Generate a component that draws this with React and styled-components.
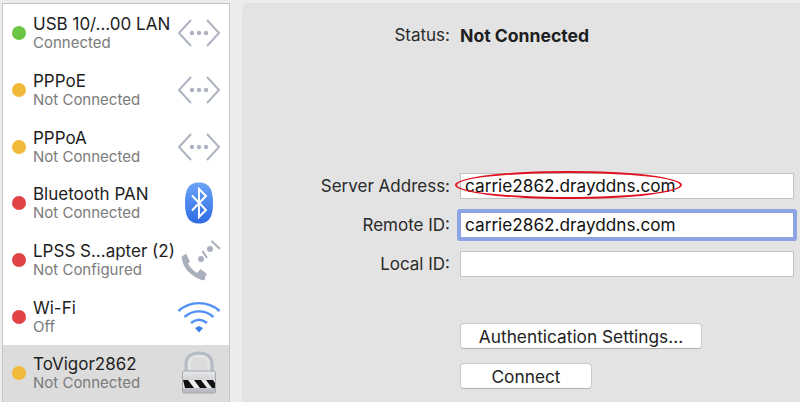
import React from 'react';
import styled, { createGlobalStyle } from 'styled-components';

const GlobalStyle = createGlobalStyle`
  html, body {
    margin: 0;
    padding: 0;
    background: #ececec;
  }
  * {
    box-sizing: border-box;
  }
`;

const Window = styled.div`
  width: 800px;
  height: 402px;
  overflow: hidden;
  display: flex;
  gap: 12px;
  padding: 3px 0 0 2px;
  background: #ececec;
  font-family: Inter, "Liberation Sans", Arial, sans-serif;
`;

const Sidebar = styled.ul`
  flex: 0 0 228px;
  margin: 0;
  padding: 1px 0 0;
  list-style: none;
  background: #fff;
  border: 1px solid #c6c6c6;
  border-bottom: none;
`;

const Row = styled.li`
  height: 56.7px;
  display: flex;
  align-items: center;
  padding: 0 8px 0 9px;
  background: ${(p) => (p.$selected ? '#dcdcdc' : 'transparent')};
`;

const Dot = styled.span`
  flex: 0 0 14px;
  height: 14px;
  border-radius: 50%;
  margin-right: 7px;
  background: ${(p) => p.$color};
`;

const RowText = styled.div`
  flex: 1;
  min-width: 0;
  padding-top: 1px;
  white-space: nowrap;
`;

const RowName = styled.div`
  font-size: 17px;
  line-height: 19px;
  color: #1e1e1e;
`;

const RowStatus = styled.div`
  font-size: 15px;
  line-height: 18px;
  color: #7b7b7b;
`;

const IconSlot = styled.div`
  flex: 0 0 44px;
  height: 44px;
  display: flex;
  align-items: center;
  justify-content: center;
`;

const Panel = styled.main`
  flex: 1;
  display: flex;
  flex-direction: column;
  background: #e3e3e3;
  border-radius: 6px 0 0 0;
  padding-top: 19px;
`;

const Field = styled.div`
  display: grid;
  grid-template-columns: 208px 334px;
  column-gap: 10px;
  align-items: center;
  margin-top: ${(p) => p.$top || 0}px;
  height: 26px;
`;

const Label = styled.label`
  text-align: right;
  font-size: 17px;
  color: #2a2a2a;
`;

const StatusValue = styled.span`
  font-size: 17.600px;
  font-weight: 700;
  color: #1e1e1e;
`;

const InputWrap = styled.div`
  position: relative;
`;

const Input = styled.div`
  height: 26px;
  padding-left: 4px;
  background: #fff;
  border: 1px solid ${(p) => (p.$focused ? '#8ca3e4' : '#c4c4c4')};
  border-radius: ${(p) => (p.$focused ? '1px' : '0')};
  font-size: 17.200px;
  line-height: 24px;
  color: #111;
  box-shadow: ${(p) => (p.$focused ? '0 0 0 3px #8ca3e4' : 'none')};
`;

const Circle = styled.span`
  position: absolute;
  left: -5px;
  top: -2px;
  width: 227px;
  height: 28px;
  border: 2px solid #e0121e;
  border-radius: 50%;
`;

const ButtonRow = styled.div`
  margin: ${(p) => p.$top}px 0 0 218px;
`;

const Button = styled.button`
  display: block;
  width: ${(p) => p.$width}px;
  height: 26px;
  padding: 0;
  background: #fff;
  border: 1px solid #c9c9c9;
  border-bottom-color: #b0b0b0;
  border-radius: 4px;
  font-family: inherit;
  font-size: 17.300px;
  color: #222;
`;

const VpnIcon = () => (
  <svg width="44" height="30" viewBox="0 0 44 30">
    <g fill="none" stroke="#adb3c0" strokeWidth="2">
      <path d="M14 2 2 15l12 13" />
      <path d="M30 2l12 13-12 13" />
    </g>
    <g fill="#adb3c0">
      <circle cx="15" cy="15" r="2.200" />
      <circle cx="22" cy="15" r="2.200" />
      <circle cx="29" cy="15" r="2.200" />
    </g>
  </svg>
);

const BluetoothIcon = () => (
  <svg width="30" height="42" viewBox="0 0 30 42">
    <defs>
      <linearGradient id="bt" x1="0" y1="0" x2="0" y2="1">
        <stop offset="0" stopColor="#6ba4f6" />
        <stop offset="1" stopColor="#2f6be4" />
      </linearGradient>
    </defs>
    <path d="M15 .5C25 .5 29 7 29 21s-4 20.500-14 20.500S1 35 1 21 5 .5 15 .5Z" fill="url(#bt)" />
    <path d="M8 13.500 22 28l-7 7V7l7 7L8 28.500" fill="none" stroke="#fff" strokeWidth="2" />
  </svg>
);

const ModemIcon = () => (
  <svg width="44" height="44" viewBox="0 0 44 44">
    <path d="M7 20C8 29 16 37 26 40" fill="none" stroke="#a9afbd" strokeWidth="4.500" strokeLinecap="round" />
    <path d="M4.500 19 9 15.500 13 24l-4 3ZM20 35l3.500-4 6.500 5-3 4.500Z" fill="#a9afbd" />
    <circle cx="24" cy="21" r="3" fill="#a9afbd" />
    <circle cx="33" cy="11" r="3" fill="#a9afbd" />
    <g stroke="#a9afbd" strokeWidth="2">
      <path d="m25.500 13 4.500 7" />
      <path d="m34.500 3 8.500 8" />
    </g>
  </svg>
);

const WifiIcon = () => (
  <svg width="44" height="34" viewBox="0 0 44 34">
    <g fill="none" stroke="#4f90f2" strokeWidth="2.400">
      <path d="M1.500 11C13 .5 31 .5 42.500 11" />
      <path d="M7.500 17c8.500-7.500 20.500-7.500 29 0" />
      <path d="M14 23c5-4 11-4 16 0" />
    </g>
    <path d="m18 28 4-2 4 2-4 4.500Z" fill="#3a7eea" />
  </svg>
);

const LockIcon = () => (
  <svg width="36" height="44" viewBox="0 0 36 44">
    <defs>
      <linearGradient id="lockBody" x1="0" y1="0" x2="0" y2="1">
        <stop offset="0" stopColor="#e6e8eb" />
        <stop offset="1" stopColor="#b4b7bb" />
      </linearGradient>
    </defs>
    <path d="M5 20V13C5 5.500 10.500 2 18 2s13 3.500 13 11v7" fill="none" stroke="#b4bac2" strokeWidth="3" />
    <path d="M8.500 20V13c0-5 4-8 9.500-8s9.500 3 9.500 8v7" fill="none" stroke="#e4e6e9" strokeWidth="2" />
    <rect x="1.500" y="20" width="33" height="22" rx="1.500" fill="url(#lockBody)" stroke="#a4a8ad" />
    <path d="M2 29h32v8H2Z" fill="#ececec" />
    <path d="M2 29h5l6 8H4ZM13 29h7l6 8h-7ZM25 29h7l2 3v5h-3Z" fill="#111" />
  </svg>
);

const services = [
  { name: 'USB 10/...00 LAN', status: 'Connected', color: '#6cc644', icon: <VpnIcon /> },
  { name: 'PPPoE', status: 'Not Connected', color: '#f0b93a', icon: <VpnIcon /> },
  { name: 'PPPoA', status: 'Not Connected', color: '#f0b93a', icon: <VpnIcon /> },
  { name: 'Bluetooth PAN', status: 'Not Connected', color: '#e04444', icon: <BluetoothIcon /> },
  { name: 'LPSS S...apter (2)', status: 'Not Configured', color: '#e04444', icon: <ModemIcon /> },
  { name: 'Wi-Fi', status: 'Off', color: '#e04444', icon: <WifiIcon /> },
  { name: 'ToVigor2862', status: 'Not Connected', color: '#f0b93a', icon: <LockIcon />, selected: true },
];

const App = () => {
  return (
    <Window>
      <GlobalStyle />
      <Sidebar>
        {services.map((s) => (
          <Row key={s.name} $selected={s.selected}>
            <Dot $color={s.color} />
            <RowText>
              <RowName>{s.name}</RowName>
              <RowStatus>{s.status}</RowStatus>
            </RowText>
            <IconSlot>{s.icon}</IconSlot>
          </Row>
        ))}
      </Sidebar>
      <Panel>
        <Field>
          <Label>Status:</Label>
          <StatusValue>Not Connected</StatusValue>
        </Field>
        <Field $top={125}>
          <Label>Server Address:</Label>
          <InputWrap>
            <Input>carrie2862.drayddns.com</Input>
            <Circle />
          </InputWrap>
        </Field>
        <Field $top={13}>
          <Label>Remote ID:</Label>
          <Input $focused>carrie2862.drayddns.com</Input>
        </Field>
        <Field $top={13}>
          <Label>Local ID:</Label>
          <Input />
        </Field>
        <ButtonRow $top={46}>
          <Button $width={242}>Authentication Settings...</Button>
        </ButtonRow>
        <ButtonRow $top={14}>
          <Button $width={132}>Connect</Button>
        </ButtonRow>
      </Panel>
    </Window>
  );
};

export default App;
